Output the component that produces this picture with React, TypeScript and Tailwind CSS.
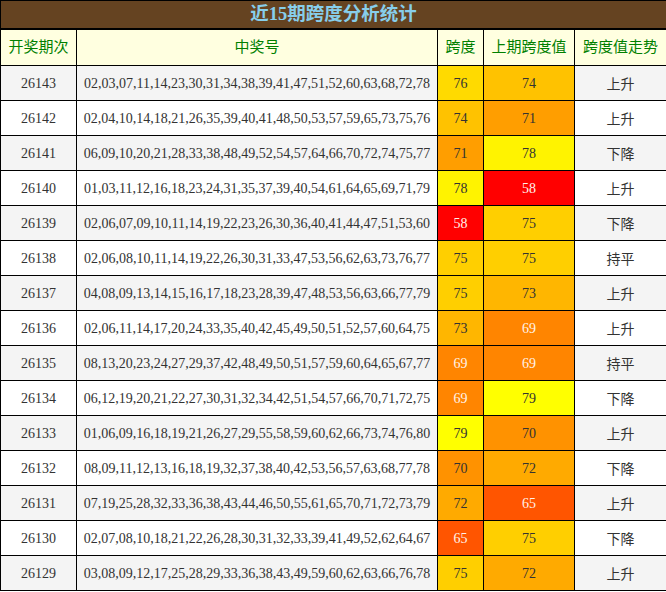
const rows: [string, string, number, number, string][] = [
  ['26143', '02,03,07,11,14,23,30,31,34,38,39,41,47,51,52,60,63,68,72,78', 76, 74, '上升'],
  ['26142', '02,04,10,14,18,21,26,35,39,40,41,48,50,53,57,59,65,73,75,76', 74, 71, '上升'],
  ['26141', '06,09,10,20,21,28,33,38,48,49,52,54,57,64,66,70,72,74,75,77', 71, 78, '下降'],
  ['26140', '01,03,11,12,16,18,23,24,31,35,37,39,40,54,61,64,65,69,71,79', 78, 58, '上升'],
  ['26139', '02,06,07,09,10,11,14,19,22,23,26,30,36,40,41,44,47,51,53,60', 58, 75, '下降'],
  ['26138', '02,06,08,10,11,14,19,22,26,30,31,33,47,53,56,62,63,73,76,77', 75, 75, '持平'],
  ['26137', '04,08,09,13,14,15,16,17,18,23,28,39,47,48,53,56,63,66,77,79', 75, 73, '上升'],
  ['26136', '02,06,11,14,17,20,24,33,35,40,42,45,49,50,51,52,57,60,64,75', 73, 69, '上升'],
  ['26135', '08,13,20,23,24,27,29,37,42,48,49,50,51,57,59,60,64,65,67,77', 69, 69, '持平'],
  ['26134', '06,12,19,20,21,22,27,30,31,32,34,42,51,54,57,66,70,71,72,75', 69, 79, '下降'],
  ['26133', '01,06,09,16,18,19,21,26,27,29,55,58,59,60,62,66,73,74,76,80', 79, 70, '上升'],
  ['26132', '08,09,11,12,13,16,18,19,32,37,38,40,42,53,56,57,63,68,77,78', 70, 72, '下降'],
  ['26131', '07,19,25,28,32,33,36,38,43,44,46,50,55,61,65,70,71,72,73,79', 72, 65, '上升'],
  ['26130', '02,07,08,10,18,21,22,26,28,30,31,32,33,39,41,49,52,62,64,67', 65, 75, '下降'],
  ['26129', '03,08,09,12,17,25,28,29,33,36,38,43,49,59,60,62,63,66,76,78', 75, 72, '上升'],
];

const MIN = 58;
const MAX = 79;

// red (min) -> yellow (max)
function spanColor(v: number) {
  const h = ((v - MIN) / (MAX - MIN)) * 60;
  return `hsl(${h.toFixed(1)}, 100%, 50%)`;
}

function SpanCell({ v }: { v: number }) {
  return (
    <td
      className={`border border-black text-center ${v < 70 ? 'text-[#fff3ea]' : 'text-[#333]'}`}
      style={{ backgroundColor: spanColor(v) }}
    >
      {v}
    </td>
  );
}

export default function App() {
  return (
    <div
      className="w-[666px] bg-white"
      style={{ fontFamily: '"Liberation Serif", "Noto Sans CJK SC", serif' }}
    >
      <table className="w-[666px] table-fixed border-collapse border border-black text-[14px] text-[#333]">
        <colgroup>
          <col className="w-[76px]" />
          <col className="w-[361px]" />
          <col className="w-[46px]" />
          <col className="w-[91px]" />
          <col className="w-[92px]" />
        </colgroup>
        <thead>
          <tr className="h-[28px] bg-[#654321]">
            <th
              colSpan={5}
              className="border border-b-2 border-black text-center text-[18.5px] font-bold leading-none text-[#87ceeb]"
            >
              近15期跨度分析统计
            </th>
          </tr>
          <tr className="h-[37px] bg-[#ffffe0] text-[15px] font-normal text-[#008000]">
            <th className="border border-black font-normal">开奖期次</th>
            <th className="border border-black font-normal">中奖号</th>
            <th className="border border-black font-normal">跨度</th>
            <th className="border border-black font-normal">上期跨度值</th>
            <th className="border border-black font-normal">跨度值走势</th>
          </tr>
        </thead>
        <tbody>
          {rows.map(([qi, nums, kd, prev, trend], i) => (
            <tr key={qi} className={`h-[35px] ${i % 2 === 0 ? 'bg-[#f4f4f4]' : 'bg-white'}`}>
              <td className="border border-black text-center">{qi}</td>
              <td className="border border-black text-center whitespace-nowrap">{nums}</td>
              <SpanCell v={kd} />
              <SpanCell v={prev} />
              <td className="border border-black pt-[3px] text-center">{trend}</td>
            </tr>
          ))}
        </tbody>
      </table>
    </div>
  );
}
